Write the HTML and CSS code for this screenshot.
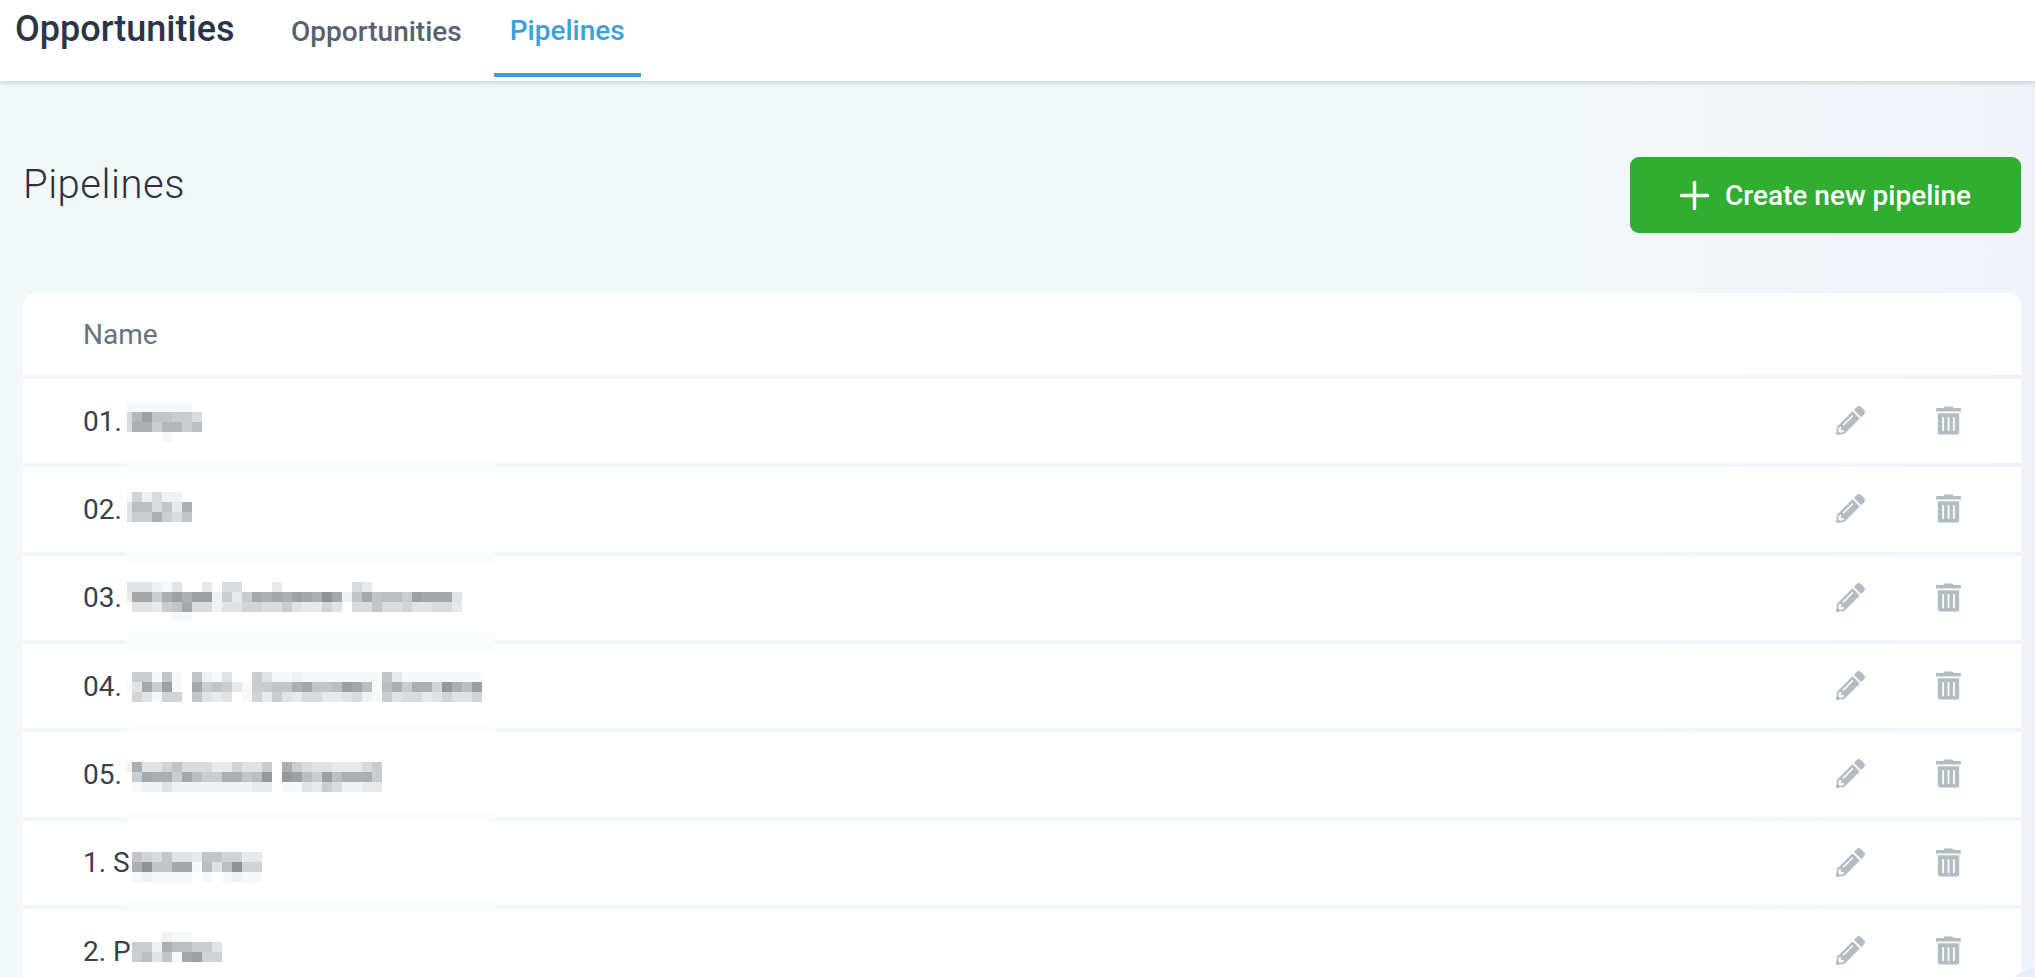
FILE: index.html
```html
<!DOCTYPE html>
<html lang="en">
<head>
<meta charset="utf-8">
<title>Pipelines</title>
<link rel="stylesheet" href="styles.css">
</head>
<body>
<div class="corner"></div>
<header class="topbar">
  <div class="brand">Opportunities</div>
  <nav class="tabs">
    <a class="tab">Opportunities</a>
    <a class="tab active">Pipelines</a>
  </nav>
</header>
<main class="content">
  <div class="toolbar">
    <h1 class="title">Pipelines</h1>
    <button class="create">
      <svg class="plus" viewBox="0 0 29 29"><path d="M14.5 1.5v26M1.5 14.5h26"/></svg>
      <span>Create new pipeline</span>
    </button>
  </div>
  <section class="table">
    <div class="row head">Name</div>
    <div class="row"><span class="name">01.</span><span class="actions"><svg class="pencil" viewBox="0 0 512 512"><use href="#i-pencil"/></svg><svg class="trash" viewBox="0 0 448 512"><use href="#i-trash"/></svg></span></div>
    <div class="row"><span class="name">02.</span><span class="actions"><svg class="pencil" viewBox="0 0 512 512"><use href="#i-pencil"/></svg><svg class="trash" viewBox="0 0 448 512"><use href="#i-trash"/></svg></span></div>
    <div class="row"><span class="name">03.</span><span class="actions"><svg class="pencil" viewBox="0 0 512 512"><use href="#i-pencil"/></svg><svg class="trash" viewBox="0 0 448 512"><use href="#i-trash"/></svg></span></div>
    <div class="row"><span class="name">04.</span><span class="actions"><svg class="pencil" viewBox="0 0 512 512"><use href="#i-pencil"/></svg><svg class="trash" viewBox="0 0 448 512"><use href="#i-trash"/></svg></span></div>
    <div class="row"><span class="name">05.</span><span class="actions"><svg class="pencil" viewBox="0 0 512 512"><use href="#i-pencil"/></svg><svg class="trash" viewBox="0 0 448 512"><use href="#i-trash"/></svg></span></div>
    <div class="row"><span class="name">1. S</span><span class="actions"><svg class="pencil" viewBox="0 0 512 512"><use href="#i-pencil"/></svg><svg class="trash" viewBox="0 0 448 512"><use href="#i-trash"/></svg></span></div>
    <div class="row"><span class="name">2. P</span><span class="actions"><svg class="pencil" viewBox="0 0 512 512"><use href="#i-pencil"/></svg><svg class="trash" viewBox="0 0 448 512"><use href="#i-trash"/></svg></span></div>
  </section>
</main>
<div class="redaction" id="redaction"></div>
<svg class="defs" aria-hidden="true">
  <symbol id="i-pencil" viewBox="0 0 512 512"><path d="M497.9 142.1l-46.1 46.1c-4.7 4.7-12.3 4.7-17 0l-111-111c-4.7-4.7-4.7-12.3 0-17l46.1-46.1c18.7-18.7 49.1-18.7 67.9 0l60.1 60.1c18.8 18.7 18.8 49.1 0 67.9zM284.2 99.8L21.6 362.4.4 483.9c-2.9 16.4 11.4 30.6 27.8 27.8l121.5-21.3 262.6-262.6c4.7-4.7 4.7-12.3 0-17l-111-111c-4.8-4.7-12.4-4.7-17.1 0zM124.1 339.9c-5.5-5.5-5.5-14.3 0-19.8l154-154c5.5-5.5 14.3-5.5 19.8 0s5.5 14.3 0 19.8l-154 154c-5.5 5.5-14.3 5.5-19.8 0zM88 424h48v36.3l-64.5 11.3-31.1-31.1L51.7 376H88v48z"/></symbol>
  <symbol id="i-trash" viewBox="0 0 448 512"><path d="M32 464a48 48 0 0 0 48 48h288a48 48 0 0 0 48-48V128H32zm272-256a16 16 0 0 1 32 0v224a16 16 0 0 1-32 0zm-96 0a16 16 0 0 1 32 0v224a16 16 0 0 1-32 0zm-96 0a16 16 0 0 1 32 0v224a16 16 0 0 1-32 0zM432 32H312l-9.4-18.7A24 24 0 0 0 281.1 0H166.8a23.72 23.72 0 0 0-21.4 13.3L136 32H16A16 16 0 0 0 0 48v32a16 16 0 0 0 16 16h416a16 16 0 0 0 16-16V48a16 16 0 0 0-16-16z"/></symbol>
</svg>
<script src="mosaic.js"></script>
</body>
</html>
```
FILE: styles.css
```css
* { box-sizing: border-box; }
html, body { margin: 0; height: 977px; overflow: hidden; }
body {
  position: relative;
  font-family: Roboto, "Liberation Sans", sans-serif;
  background: linear-gradient(to right, #f2f7fa 78%, #f0f4f9);
  color: #2b3238;
}
.topbar {
  display: flex;
  align-items: flex-start;
  height: 81px;
  background: #fff;
  box-shadow: 0 2px 5px rgba(60, 80, 90, .22);
  padding-left: 15px;
  position: relative;
}
.brand {
  flex: none;
  width: 260px;
  font-size: 36px;
  font-weight: 500;
  line-height: 40px;
  margin-top: 9px;
  color: #2a3648;
}
.tabs { display: flex; gap: 16px; }
.tab {
  height: 77px;
  padding: 14px 16px 0;
  font-size: 28px;
  font-weight: 500;
  line-height: 36px;
  color: #566274;
  border-bottom: 4px solid transparent;
}
.tab.active { color: #3ba0db; border-bottom-color: #3ba0db; padding-top: 13px; }
.content { padding: 0 14px 0 23px; }
.toolbar {
  display: flex;
  justify-content: space-between;
  align-items: flex-start;
  margin-top: 76px;
  height: 76px;
  margin-bottom: 60px;
}
.title {
  margin: 5px 0 0;
  font-size: 40px;
  font-weight: 300;
  letter-spacing: .5px;
  line-height: 46px;
  color: #2b3238;
}
.create {
  display: flex;
  align-items: center;
  height: 76px;
  width: 391px;
  padding: 0 0 0 50px;
  border: 0;
  border-radius: 9px;
  background: #31ad31;
  color: #fff;
  font: 500 28px Roboto, sans-serif;
  box-shadow: 0 1px 3px rgba(0, 0, 0, .08);
}
.plus { width: 29px; height: 29px; margin-right: 16px; fill: none; stroke: #fff; stroke-width: 3.4; stroke-linecap: round; }
.table { display: flex; flex-direction: column; gap: 4px; }
.row {
  display: flex;
  align-items: center;
  justify-content: space-between;
  flex: none;
  height: 84.33px;
  padding: 0 60px;
  background: #fff;
  font-size: 28px;
  color: #384148;
}
.row.head {
  height: 82px;
  border-radius: 12px 12px 0 0;
  color: #65747c;
}
.actions { display: flex; align-items: center; gap: 71px; padding-bottom: 1px; }
.pencil { width: 29px; height: 29px; fill: #b3bdc1; }
.trash { width: 25px; height: 29px; fill: #b3bdc1; }
.defs { display: none; }
.redaction {
  position: absolute;
  left: 127px;
  top: 402px;
  display: grid;
  grid-template-columns: 5px repeat(36, 10px) 3px;
  grid-auto-rows: 10px;
}
.patch { grid-column: 1 / -1; background: #fafcfd; }
.corner {
  position: absolute;
  left: 1990px;
  top: 965px;
  width: 120px;
  height: 120px;
  border-radius: 50%;
  background: #e6edf8;
}
```
FILE: mosaic.js
```js
var rows = {
  402: "eeeeeee",
  412: "a527788a",
  422: "a4485586",
  432: "....e",
  492: "e9dadd",
  502: "b66a7c4",
  512: "b8848a7",
  582: "bbbdeb..c.aa...c.......ac",
  592: "c33842422d8c8343423403d7376682333b",
  602: ".bbc873aadbb99aa8bcc9b.aa7aa9bbaac",
  612: ".....ee",
  672: ".88e7e.7deb..8beedeeeeeeee7ceeeeeeee",
  682: "eb382e.3878ce887743776236e6484491462",
  692: ".9be99.7bcb.e9c8bcaaccbade8baacb9bb9",
  762: "d4bb97aaacc9bb8.48abbccca8",
  772: ".83448368844761.1268264448",
  782: ".eddbddddddddcc.eebc8addcc",
  852: ".79a7bbc7799cc",
  862: ".407733e6b6099",
  872: ".edeeee.e.edee",
  932: "....dee",
  942: ".88d46688b",
  952: ".86b7e3299"
};
var host = document.getElementById("redaction");
function gray(c) {
  var v = Math.min(255, 144 + parseInt(c, 16) * 7.4) | 0;
  return "rgb(" + v + "," + (v + 1) + "," + (v + 2) + ")";
}
Object.keys(rows).forEach(function (y) {
  var r = (y - 402) / 10 + 1;
  rows[y].split("").forEach(function (c, i) {
    if (c === ".") return;
    var cell = document.createElement("div");
    cell.style.gridRow = r;
    cell.style.gridColumn = i + 1;
    cell.style.background = gray(c);
    host.appendChild(cell);
  });
});
[[462, 1], [552, 1], [632, 2], [722, 1], [812, 1], [902, 1]].forEach(function (p) {
  var d = document.createElement("div");
  d.className = "patch";
  d.style.gridRow = (p[0] - 402) / 10 + 1 + " / span " + p[1];
  host.appendChild(d);
});
```
